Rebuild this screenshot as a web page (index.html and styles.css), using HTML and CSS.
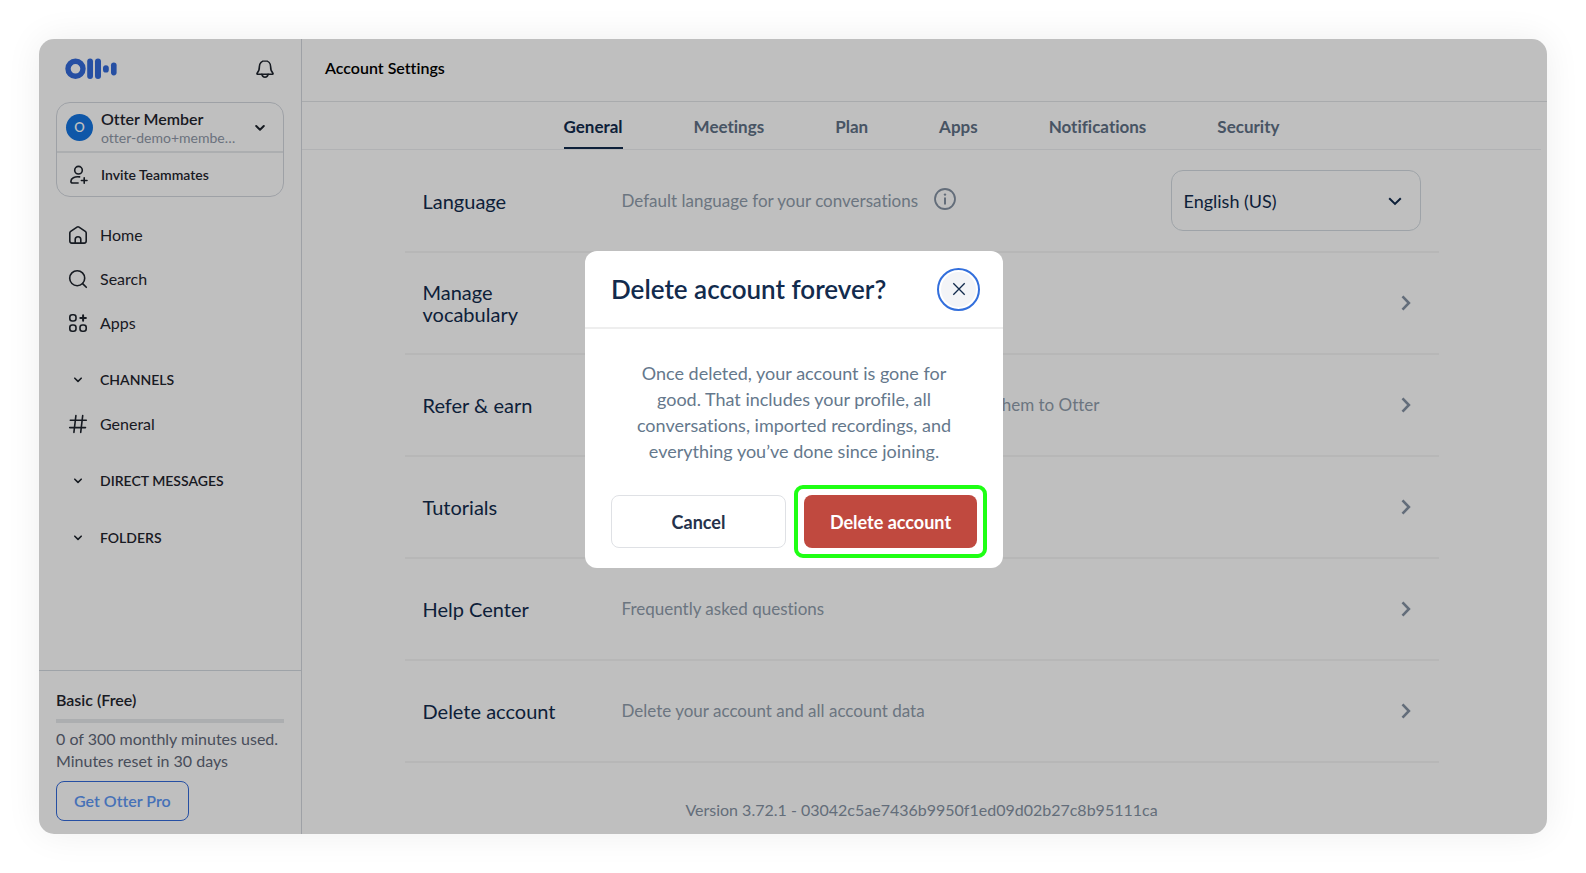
FILE: index.html
```html
<!DOCTYPE html>
<html lang="en">
<head>
<meta charset="utf-8">
<meta name="viewport" content="width=device-width, initial-scale=1">
<title>Account Settings</title>
<link rel="stylesheet" href="styles.css">
</head>
<body>
<div class="window">
  <aside class="sidebar">
    <div class="brand">
      <svg class="logo" width="52" height="22" viewBox="0 0 52 22" role="img" aria-label="Otter">
        <circle cx="10.5" cy="10.8" r="7.5" fill="none" stroke="currentColor" stroke-width="5.4"/>
        <rect x="22.2" y=".6" width="5.8" height="20.4" rx="2.9"/>
        <rect x="30" y=".6" width="6" height="20.4" rx="3"/>
        <rect x="38" y="7.2" width="5.8" height="7.4" rx="2.9"/>
        <rect x="46" y="4.4" width="5.6" height="13" rx="2.8"/>
      </svg>
      <button class="icon-button" type="button" aria-label="Notifications">
        <svg width="20" height="20" viewBox="0 0 20 20" class="stroke"><path d="M10 1.8c-3.4 0-5.6 2.6-5.6 5.8 0 3.4-1 5.400-2.300 6.600-.4.4-.1 1 .4 1h15c.5 0 .8-.6.4-1-1.300-1.200-2.300-3.200-2.300-6.600 0-3.200-2.200-5.800-5.600-5.800z"/><path d="M6.900 15.400c.3 1.700 1.500 2.800 3.100 2.800s2.800-1.100 3.100-2.800"/></svg>
      </button>
    </div>

    <div class="workspace">
      <button class="member" type="button">
        <span class="avatar">O</span>
        <span class="member-text"><span class="member-name">Otter Member</span><span class="member-mail">otter-demo+membe…</span></span>
        <svg width="10" height="10" viewBox="0 0 10 10" class="stroke strong"><path d="M1.200 3 5 6.800 8.800 3"/></svg>
      </button>
      <button class="invite" type="button">
        <svg width="20" height="20" viewBox="0 0 20 20" class="stroke"><circle cx="9.500" cy="5.200" r="3.800"/><path d="M10.600 11.900C5.500 11.200 1.900 13.400 1.900 16.200c0 1.200.6 1.800 1.800 1.800h5.400M15.200 12.700v5.600M12.400 15.500H18"/></svg>
        <span>Invite Teammates</span>
      </button>
    </div>

    <nav class="nav" aria-label="Main">
      <a class="nav-item" href="#home"><svg width="20" height="20" viewBox="0 0 20 20" class="stroke"><path d="M1.800 7.900c0-.7.3-1.200.9-1.600l6.300-4.200c.6-.4 1.400-.4 2 0l6.300 4.200c.6.400.9.900.9 1.600v8.200c0 1.200-.8 2-2 2H3.800c-1.200 0-2-.8-2-2z"/><path d="M7.200 18v-3.600c0-1.600 1.100-2.700 2.800-2.700s2.800 1.100 2.800 2.700V18"/></svg>Home</a>
      <a class="nav-item" href="#search"><svg width="20" height="20" viewBox="0 0 20 20" class="stroke"><circle cx="9.200" cy="9.200" r="7.500"/><path d="m14.600 14.600 3.700 3.700"/></svg>Search</a>
      <a class="nav-item" href="#apps"><svg width="20" height="20" viewBox="0 0 20 20" class="stroke"><rect x="1.800" y="1.800" width="6.200" height="6.200" rx="2.400"/><rect x="1.800" y="12" width="6.200" height="6.200" rx="2.400"/><rect x="12" y="12" width="6.200" height="6.200" rx="2.400"/><path d="M15.100 2.200v5.600M12.300 5h5.600" stroke-width="2"/></svg>Apps</a>

      <button class="nav-group" type="button"><svg width="20" height="20" viewBox="0 0 20 20" class="stroke"><path d="m6.800 8.200 3.200 3.200 3.200-3.200"/></svg>CHANNELS</button>
      <a class="nav-item" href="#general"><svg width="20" height="20" viewBox="0 0 20 20" class="stroke"><path d="M7.900 1.600 5.900 18.400M14.700 1.600l-2 16.800M2.300 6.200h16M1.700 13.600h15.800"/></svg>General</a>
      <button class="nav-group" type="button"><svg width="20" height="20" viewBox="0 0 20 20" class="stroke"><path d="m6.800 8.200 3.200 3.200 3.200-3.200"/></svg>DIRECT MESSAGES</button>
      <button class="nav-group" type="button"><svg width="20" height="20" viewBox="0 0 20 20" class="stroke"><path d="m6.800 8.200 3.200 3.200 3.200-3.200"/></svg>FOLDERS</button>
    </nav>

    <div class="plan">
      <h2 class="plan-name">Basic (Free)</h2>
      <div class="meter" role="progressbar" aria-label="Minutes used" aria-valuenow="0" aria-valuemin="0" aria-valuemax="300"></div>
      <p class="plan-text">0 of 300 monthly minutes used.<br>Minutes reset in 30 days</p>
      <button class="upgrade" type="button">Get Otter Pro</button>
    </div>
  </aside>

  <main class="main">
    <header class="header"><h1 class="page-title">Account Settings</h1></header>
    <div class="content">
      <nav class="tabs" aria-label="Settings">
        <a class="tab active" href="#tab-general" aria-current="page">General</a>
        <a class="tab" href="#tab-meetings">Meetings</a>
        <a class="tab" href="#tab-plan">Plan</a>
        <a class="tab" href="#tab-apps">Apps</a>
        <a class="tab" href="#tab-notifications">Notifications</a>
        <a class="tab" href="#tab-security">Security</a>
      </nav>
      <div class="settings">
        <section class="row">
          <label class="row-label" for="language">Language</label>
          <p class="row-text">Default language for your conversations
            <svg class="info" width="22" height="22" viewBox="0 0 22 22" role="img" aria-label="More information"><circle cx="11" cy="11" r="10" fill="none" stroke="currentColor" stroke-width="1.800"/><path d="M10 9.400h2v7h-2z"/><circle cx="11" cy="6.600" r="1.200"/></svg>
          </p>
          <div class="select">
            <select id="language"><option>English (US)</option></select>
            <svg class="select-arrow" width="14" height="14" viewBox="0 0 14 14"><path d="m1.200 4.200 5.800 5.700 5.800-5.700" fill="none" stroke="currentColor" stroke-width="2"/></svg>
          </div>
        </section>
        <section class="row">
          <h2 class="row-label">Manage vocabulary</h2><p class="row-text"></p>
          <button class="row-open" type="button" aria-label="Open Manage vocabulary"><svg width="10" height="16" viewBox="0 0 10 16"><path d="m1.500 1.400 6.400 6.600-6.400 6.600"/></svg></button>
        </section>
        <section class="row">
          <h2 class="row-label">Refer &amp; earn</h2><p class="row-text">Earn a month of Otter Pro for free when you refer them to Otter</p>
          <button class="row-open" type="button" aria-label="Open Refer &amp; earn"><svg width="10" height="16" viewBox="0 0 10 16"><path d="m1.500 1.400 6.400 6.600-6.400 6.600"/></svg></button>
        </section>
        <section class="row">
          <h2 class="row-label">Tutorials</h2><p class="row-text"></p>
          <button class="row-open" type="button" aria-label="Open Tutorials"><svg width="10" height="16" viewBox="0 0 10 16"><path d="m1.500 1.400 6.400 6.600-6.400 6.600"/></svg></button>
        </section>
        <section class="row">
          <h2 class="row-label">Help Center</h2><p class="row-text">Frequently asked questions</p>
          <button class="row-open" type="button" aria-label="Open Help Center"><svg width="10" height="16" viewBox="0 0 10 16"><path d="m1.500 1.400 6.400 6.600-6.400 6.600"/></svg></button>
        </section>
        <section class="row">
          <h2 class="row-label">Delete account</h2><p class="row-text">Delete your account and all account data</p>
          <button class="row-open" type="button" aria-label="Open Delete account"><svg width="10" height="16" viewBox="0 0 10 16"><path d="m1.500 1.400 6.400 6.600-6.400 6.600"/></svg></button>
        </section>
        <p class="version">Version 3.72.1 - 03042c5ae7436b9950f1ed09d02b27c8b95111ca</p>
      </div>
    </div>
  </main>

  <div class="backdrop">
    <div class="modal" role="dialog" aria-modal="true" aria-labelledby="modal-title">
      <header class="modal-head">
        <h2 class="modal-title" id="modal-title">Delete account forever?</h2>
        <button class="close" type="button" aria-label="Close"><svg width="14" height="14" viewBox="0 0 14 14"><path d="m1.300 1.300 11.400 11.400M12.700 1.300 1.300 12.700"/></svg></button>
      </header>
      <p class="modal-text">Once deleted, your account is gone for good. That includes your profile, all conversations, imported recordings, and everything you’ve done since joining.</p>
      <div class="modal-actions">
        <button class="cancel" type="button">Cancel</button>
        <button class="delete" type="button">Delete account</button>
      </div>
    </div>
  </div>
</div>
</body>
</html>
```
FILE: styles.css
```css
* { box-sizing: border-box; }

body {
  margin: 0;
  min-height: 100vh;
  padding: 39px;
  display: flex;
  background: #fff;
  color: #1f252e;
  font: 16px/22px Lato, "Liberation Sans", sans-serif;
  font-variant-ligatures: none;
}

h1, h2, p { margin: 0; font-weight: 400; }
a { color: inherit; text-decoration: none; }
svg { display: block; flex: none; }
button, select { font: inherit; font-variant-ligatures: none; color: inherit; }
button { padding: 0; border: 0; background: none; cursor: pointer; }

.stroke {
  fill: none;
  stroke: currentColor;
  stroke-width: 1.6;
  stroke-linecap: round;
  stroke-linejoin: round;
}
.stroke.strong { stroke-width: 2; }

.window {
  position: relative;
  flex: 1;
  display: flex;
  overflow: hidden;
  border-radius: 15px;
  background: #fff;
}
body::before {
  content: "";
  position: absolute;
  inset: 39px;
  border-radius: 15px;
  box-shadow: 0 0 36px rgba(0, 0, 0, .07);
}

/* Sidebar */
.sidebar {
  flex: none;
  width: 263px;
  display: flex;
  flex-direction: column;
  border-right: 1px solid #d3d7de;
}
.brand {
  display: flex;
  align-items: center;
  justify-content: space-between;
  height: 60px;
  padding: 0 26px;
}
.logo { color: #336ada; fill: #336ada; }
.workspace {
  margin: 3px 17px 0;
  border: 1px solid #d3d7de;
  border-radius: 14px;
}
.member {
  display: flex;
  align-items: center;
  gap: 8px;
  width: 100%;
  height: 50px;
  padding: 1px 18px 0 9px;
  border-bottom: 2px solid #e6e8eb;
  text-align: left;
}
.avatar {
  width: 27px;
  border-radius: 50%;
  background: #1474e0;
  color: #fff;
  font-size: 13px;
  line-height: 27px;
  font-weight: 600;
  text-align: center;
}
.member-text { flex: 1; display: flex; flex-direction: column; line-height: 19px; }
.member-name { font-weight: 600; }
.member-mail { color: #8f98a8; font-size: 14px; }
.invite {
  display: flex;
  align-items: center;
  gap: 12px;
  width: 100%;
  height: 43px;
  padding: 0 12px;
  font-size: 14px;
  font-weight: 600;
}

.nav { flex: 1; padding: 16px 29px; }
.nav-item, .nav-group {
  display: flex;
  align-items: center;
  gap: 12px;
  width: 100%;
  height: 44px;
}
.nav-group { margin-top: 13px; font-size: 14px; font-weight: 600; }

.plan { padding: 18px 17px 13px; border-top: 1px solid #d3dae0; }
.plan-name { font-size: 16px; font-weight: 600; }
.meter { height: 4px; margin: 8px 0 5px; background: #e6e8eb; }
.plan-text { color: #5f6779; }
.upgrade {
  height: 40px;
  margin-top: 9px;
  padding: 0 17px;
  border: 1px solid #336ada;
  border-radius: 8px;
  color: #5e97f5;
  font-weight: 600;
}

/* Settings */
.main { flex: 1; min-width: 0; }
.header {
  display: flex;
  align-items: center;
  height: 63px;
  padding: 0 23px 4px;
  border-bottom: 1px solid #e2e4e7;
}
.page-title { color: #000; font-size: 16px; font-weight: 600; }
.content { margin-right: 6px; }
.tabs {
  display: flex;
  justify-content: center;
  gap: 71px;
  height: 48px;
  border-bottom: 1px solid #eceef0;
  color: #5f7186;
  font-size: 17px;
  font-weight: 700;
}
.tab { padding-top: 14px; border-bottom: 2px solid transparent; }
.tab.active { color: #122b4d; border-color: #122b4d; }

.settings { max-width: 1034px; margin: 0 auto; color: #122b4d; }
.row {
  display: flex;
  align-items: center;
  height: 102px;
  padding: 0 18px;
  border-bottom: 2px solid #f4f4f4;
}
.row:first-child { height: 103px; }
.row-label { flex: none; width: 148px; margin-right: 51px; font-size: 20px; line-height: 22px; }
.row-text { flex: 1; display: flex; align-items: center; gap: 16px; color: #8f9cab; font-size: 17px; }
.info { fill: currentColor; color: #8592a3; margin-bottom: 4px; }
.select { position: relative; width: 250px; }
.select select {
  appearance: none;
  width: 100%;
  height: 61px;
  padding: 0 12px;
  border: 1px solid #d3dae0;
  border-radius: 12px;
  background: #fff;
  font-size: 18px;
}
.select-arrow { position: absolute; right: 19px; top: 24px; pointer-events: none; }
.row-open { padding: 8px 10px; color: #8592a3; }
.row-open path { fill: none; stroke: currentColor; stroke-width: 2.6; }
.version { padding: 36px 0 11px; color: #8592a3; font-size: 16px; text-align: center; }

/* Confirmation dialog */
.backdrop {
  position: absolute;
  inset: 0;
  display: flex;
  align-items: flex-start;
  justify-content: center;
  padding: 212px 0 0 2px;
  background: rgba(0, 0, 0, .25);
}
.modal { width: 418px; padding-bottom: 20px; border-radius: 12px; background: #fff; }
.modal-head {
  display: flex;
  align-items: center;
  justify-content: space-between;
  height: 78px;
  padding: 0 23px 0 26px;
  border-bottom: 2px solid #eee;
}
.modal-title { color: #122b4d; font-size: 26px; line-height: 32px; font-weight: 600; }
.close {
  display: grid;
  place-items: center;
  width: 43px;
  height: 43px;
  border: 2px solid #336fdc;
  border-radius: 50%;
  background: #f3f4f7;
  box-shadow: inset 0 0 0 2px #fff;
}
.close path { fill: none; stroke: #122b4d; stroke-width: 1.3; }
.modal-text {
  padding: 31px 38px;
  color: #65788c;
  font-size: 18px;
  line-height: 26px;
  text-align: center;
}
.modal-actions { display: flex; gap: 18px; padding: 0 26px; }
.cancel, .delete {
  flex: 1;
  height: 53px;
  border-radius: 8px;
  font-size: 18px;
  font-weight: 700;
}
.cancel { border: 1px solid #dfe1e5; color: #26324b; }
.delete { position: relative; background: #c0493f; color: #fff; }
.delete::after {
  content: "";
  position: absolute;
  inset: -10px;
  border: 4px solid #1fff14;
  border-radius: 9px;
}
```
